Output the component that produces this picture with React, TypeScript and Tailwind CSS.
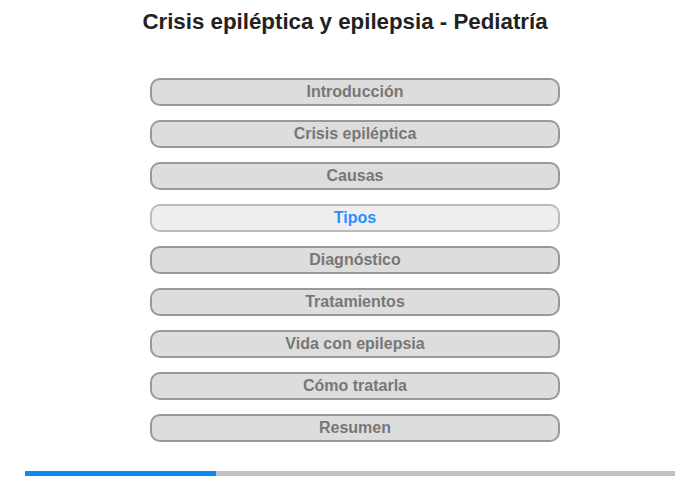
import React from "react";

const items = [
  "Introducción",
  "Crisis epiléptica",
  "Causas",
  "Tipos",
  "Diagnóstico",
  "Tratamientos",
  "Vida con epilepsia",
  "Cómo tratarla",
  "Resumen",
];

export default function App() {
  return (
    <div
      className="w-[700px] h-[480px] bg-white flex flex-col items-center"
      style={{ fontFamily: '"Liberation Sans", Arial, sans-serif' }}
    >
      <h1 className="mt-[9px] pr-[10px] h-[26px] leading-[26px] text-[22.3px] font-bold text-[#222]">
        Crisis epiléptica y epilepsia - Pediatría
      </h1>
      <div className="mt-[43px] ml-[10px] flex flex-col gap-[14px]">
        {items.map((t) => {
          const active = t === "Tipos";
          return (
            <div
              key={t}
              className={
                active
                  ? "w-[410px] h-[28px] rounded-[10px] border-2 border-[#bbbbbb] bg-[#eeeeee] flex items-center justify-center text-[16px] font-bold text-[#2a90ff]"
                  : "w-[410px] h-[28px] rounded-[10px] border-2 border-[#999999] bg-[#dddddd] flex items-center justify-center text-[16px] font-bold text-[#777777]"
              }
            >
              {t}
            </div>
          );
        })}
      </div>
      <div className="mt-[29px] w-[650px] h-[5px] bg-[#c2c2c2] flex">
        <div className="w-[191px] h-full bg-[#0a88f5]" />
      </div>
    </div>
  );
}
